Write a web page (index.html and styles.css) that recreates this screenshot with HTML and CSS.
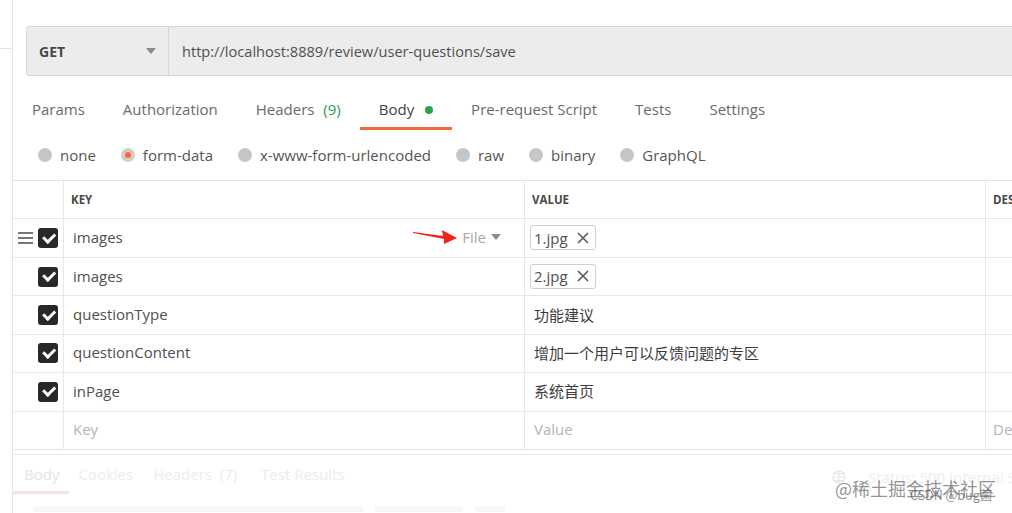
FILE: index.html
```html
<!DOCTYPE html>
<html lang="en">
<head>
<meta charset="utf-8">
<title>Postman request</title>
<link rel="stylesheet" href="styles.css">
</head>
<body>
<div class="app">
  <div class="edge"><div class="edge-line"></div></div>
  <div class="main">
    <div class="urlbar">
      <div class="method"><span>GET</span><span class="caret"></span></div>
      <div class="url">http://localhost:8889/review/user-questions/save</div>
    </div>

    <div class="tabs">
      <div class="tab">Params</div>
      <div class="tab">Authorization</div>
      <div class="tab">Headers <span class="count">(9)</span></div>
      <div class="tab active">Body <span class="dot"></span></div>
      <div class="tab">Pre-request Script</div>
      <div class="tab">Tests</div>
      <div class="tab">Settings</div>
    </div>

    <div class="radios">
      <div class="radio"><span class="circle"></span>none</div>
      <div class="radio"><span class="circle on"></span>form-data</div>
      <div class="radio"><span class="circle"></span>x-www-form-urlencoded</div>
      <div class="radio"><span class="circle"></span>raw</div>
      <div class="radio"><span class="circle"></span>binary</div>
      <div class="radio"><span class="circle"></span>GraphQL</div>
    </div>

    <div class="table">
      <div class="row head">
        <div class="cell ctl"></div>
        <div class="cell key">KEY</div>
        <div class="cell val">VALUE</div>
        <div class="cell desc">DESCRIPTION</div>
      </div>
      <div class="row">
        <div class="cell ctl"><span class="drag"><i></i><i></i><i></i></span><span class="check"></span></div>
        <div class="cell key"><span class="ktext">images</span>
          <span class="type">File <span class="tcaret"></span></span>
          <svg class="arrow" width="46" height="16" viewBox="0 0 46 16"><polygon points="0,3 30,7 29,1 44,9 31,15 31,10 0,4" fill="#f2231b"/></svg>
        </div>
        <div class="cell val"><span class="chip">1.jpg <svg class="x" width="12" height="12" viewBox="0 0 12 12"><path d="M1 1L11 11M11 1L1 11" stroke="#5e5e5e" stroke-width="1.7" fill="none"/></svg></span></div>
        <div class="cell desc"></div>
      </div>
      <div class="row">
        <div class="cell ctl"><span class="check"></span></div>
        <div class="cell key"><span class="ktext">images</span></div>
        <div class="cell val"><span class="chip">2.jpg <svg class="x" width="12" height="12" viewBox="0 0 12 12"><path d="M1 1L11 11M11 1L1 11" stroke="#5e5e5e" stroke-width="1.7" fill="none"/></svg></span></div>
        <div class="cell desc"></div>
      </div>
      <div class="row">
        <div class="cell ctl"><span class="check"></span></div>
        <div class="cell key"><span class="ktext">questionType</span></div>
        <div class="cell val"><span class="vtext">功能建议</span></div>
        <div class="cell desc"></div>
      </div>
      <div class="row">
        <div class="cell ctl"><span class="check"></span></div>
        <div class="cell key"><span class="ktext">questionContent</span></div>
        <div class="cell val"><span class="vtext">增加一个用户可以反馈问题的专区</span></div>
        <div class="cell desc"></div>
      </div>
      <div class="row">
        <div class="cell ctl"><span class="check"></span></div>
        <div class="cell key"><span class="ktext">inPage</span></div>
        <div class="cell val"><span class="vtext">系统首页</span></div>
        <div class="cell desc"></div>
      </div>
      <div class="row">
        <div class="cell ctl"></div>
        <div class="cell key"><span class="ph">Key</span></div>
        <div class="cell val"><span class="ph">Value</span></div>
        <div class="cell desc"><span class="ph">Description</span></div>
      </div>
    </div>

    <div class="response">
      <div class="rtabs">
        <div class="rtab active">Body</div>
        <div class="rtab">Cookies</div>
        <div class="rtab">Headers&nbsp; (7)</div>
        <div class="rtab">Test Results</div>
      </div>
      <div class="status">
        <svg class="globe" width="14" height="14" viewBox="0 0 14 14"><circle cx="7" cy="7" r="6" fill="none" stroke="#e4e4e4" stroke-width="1.2"/><path d="M1 7h12M7 1v12M3 3.5h8M3 10.5h8" stroke="#e4e4e4" stroke-width="1" fill="none"/></svg>
        <span>Status: 500 Internal Server Error</span>
      </div>
      <div class="watermark">@稀土掘金技术社区</div>
      <div class="csdn">CSDN @bug菌</div>
      <div class="rbars"><span class="b1"></span><span class="b2"></span><span class="b3"></span></div>
    </div>
  </div>
</div>
</body>
</html>
```
FILE: styles.css
```css
html, body {
  margin: 0;
  padding: 0;
  background: #ffffff;
}
body {
  width: 1012px;
  height: 513px;
  overflow: hidden;
  font-family: "Open Sans", "Noto Sans CJK SC", sans-serif;
  color: #505050;
}
.app {
  display: flex;
  height: 513px;
}
.edge {
  width: 12px;
  flex: none;
  border-right: 1px solid #e6e6e6;
  padding-top: 48px;
}
.edge-line {
  height: 1px;
  background: #e3e3e3;
}
.main {
  flex: 1;
  min-width: 0;
  overflow: hidden;
  padding-top: 26px;
  position: relative;
}

/* URL bar */
.urlbar {
  margin-left: 13px;
  margin-right: -20px;
  height: 48px;
  display: flex;
  background: #ececec;
  border: 1px solid #d6d6d6;
  border-radius: 3px 0 0 3px;
}
.method {
  width: 142px;
  box-sizing: border-box;
  flex: none;
  display: flex;
  align-items: center;
  justify-content: space-between;
  padding: 0 12px 0 12px;
  border-right: 1px solid #d6d6d6;
  font-size: 14px;
  font-weight: 700;
  color: #484848;
}
.caret {
  width: 0;
  height: 0;
  border-left: 5px solid transparent;
  border-right: 5px solid transparent;
  border-top: 6px solid #8a8a8a;
}
.url {
  display: flex;
  align-items: center;
  padding-left: 13px;
  font-size: 14.6px;
  color: #505050;
}

/* Tabs */
.tabs {
  display: flex;
  margin-top: 16px;
  height: 38px;
}
.tab {
  padding: 0 19px;
  font-size: 15px;
  line-height: 35px;
  color: #6a6a6a;
  border-bottom: 3px solid transparent;
  display: flex;
  align-items: center;
  gap: 5px;
  white-space: pre;
}
.tab.active {
  color: #444444;
  border-bottom-color: #f26b3a;
}
.count {
  color: #2b9a48;
}
.dot {
  width: 8px;
  height: 8px;
  border-radius: 50%;
  background: #26a54f;
  margin-left: 2px;
}

/* Radios */
.radios {
  display: flex;
  align-items: center;
  height: 50px;
  padding-left: 25px;
  gap: 25px;
}
.radio {
  display: flex;
  align-items: center;
  gap: 8px;
  font-size: 15px;
  color: #555555;
}
.circle {
  width: 14px;
  height: 14px;
  border-radius: 50%;
  background: #c6c6c6;
  box-sizing: border-box;
}
.circle.on {
  background: #f26b3a;
  border: 3px solid #cfcfcf;
  box-shadow: inset 0 0 0 1px #e8d2c8;
}

/* Table */
.table {
  border-top: 1px solid #e4e4e4;
  border-bottom: 1px solid #e4e4e4;
  margin-right: -40px;
}
.row {
  display: grid;
  grid-template-columns: 51px 461px 461px 1fr;
  height: 38.45px;
  box-sizing: border-box;
  border-bottom: 1px solid #e8e8e8;
}
.row:last-child {
  border-bottom: none;
  height: 37.45px;
}
.cell {
  display: flex;
  align-items: center;
  border-right: 1px solid #e8e8e8;
  font-size: 15px;
  color: #505050;
  min-width: 0;
  overflow: hidden;
  white-space: nowrap;
  padding-bottom: 2px;
  box-sizing: border-box;
}
.head .cell {
  font-size: 11.5px;
  font-weight: 700;
  color: #484848;
  padding-left: 7px;
  padding-bottom: 0;
}
.head .ctl {
  padding-left: 0;
}
.ctl {
  justify-content: flex-end;
  gap: 5px;
  padding-right: 5px;
  padding-bottom: 0;
}
.key {
  padding-left: 9px;
  position: relative;
}
.val {
  padding-left: 5px;
}
.desc {
  padding-left: 7px;
}
.check {
  width: 20px;
  height: 20px;
  border-radius: 3px;
  background: #282828;
  position: relative;
  flex: none;
}
.check::after {
  content: "";
  position: absolute;
  left: 4.5px;
  top: 4.5px;
  width: 9px;
  height: 4.5px;
  border-left: 3px solid #ffffff;
  border-bottom: 3px solid #ffffff;
  transform: rotate(-45deg);
}
.drag {
  display: flex;
  flex-direction: column;
  gap: 3px;
  width: 15px;
}
.drag i {
  display: block;
  height: 2px;
  background: #777777;
}
.ktext {
  color: #505050;
}
.type {
  margin-left: auto;
  margin-right: 23px;
  color: #a8a8a8;
  font-size: 15px;
  display: flex;
  align-items: center;
  gap: 5px;
}
.tcaret {
  width: 0;
  height: 0;
  border-left: 5px solid transparent;
  border-right: 5px solid transparent;
  border-top: 6px solid #8c8c8c;
}
.arrow {
  position: absolute;
  left: 349px;
  top: 10px;
}
.chip {
  display: inline-flex;
  align-items: center;
  gap: 9px;
  height: 23px;
  padding: 0 6px 0 3px;
  border: 1px solid #cfcfcf;
  border-radius: 3px;
  font-size: 15px;
  color: #505050;
  margin-top: 1px;
}
.x {
  display: block;
}
.vtext {
  padding-left: 4px;
  font-family: "Noto Sans CJK SC", sans-serif;
  font-size: 15px;
  color: #3c3c3c;
}
.ph {
  color: #b4b4b4;
  padding-left: 4px;
}
.key .ph {
  padding-left: 0;
}
.desc .ph {
  padding-left: 0;
}

/* Response */
.response {
  margin-top: 4px;
  border-top: 1px solid #eaeaea;
  height: 70px;
  position: relative;
}
.rtabs {
  display: flex;
  height: 39px;
}
.rtab {
  padding: 2px 0 0 0;
  margin-left: 20px;
  font-size: 15px;
  line-height: 35px;
  color: #ececec;
  border-bottom: 3px solid transparent;
  white-space: pre;
}
.rtab:first-child {
  margin-left: -1px;
  padding-left: 12px;
  padding-right: 10px;
}
.rtab:nth-child(2) {
  margin-left: 9px;
}
.rtab:nth-child(4) {
  margin-left: 24px;
}
.rtab.active {
  color: #e3e3e3;
  border-bottom-color: #fbe1e1;
}
.status {
  position: absolute;
  left: 819px;
  top: 12px;
  display: flex;
  align-items: center;
  gap: 22px;
  font-size: 15px;
  color: #ededed;
  white-space: nowrap;
}
.watermark {
  position: absolute;
  left: 822px;
  top: 20px;
  font-family: "Noto Sans CJK SC", sans-serif;
  font-size: 18px;
  color: rgba(110, 110, 110, 0.75);
  white-space: nowrap;
}
.csdn {
  position: absolute;
  left: 897px;
  top: 30px;
  font-family: "Noto Sans CJK SC", sans-serif;
  font-size: 12.5px;
  color: rgba(90, 90, 90, 0.7);
  white-space: nowrap;
}
.rbars {
  display: flex;
  gap: 12px;
  padding-left: 20px;
  margin-top: 12px;
}
.rbars span {
  height: 6px;
  background: #f7f7f7;
}
.b1 { width: 330px; }
.b2 { width: 88px; }
.b3 { width: 30px; }
```
